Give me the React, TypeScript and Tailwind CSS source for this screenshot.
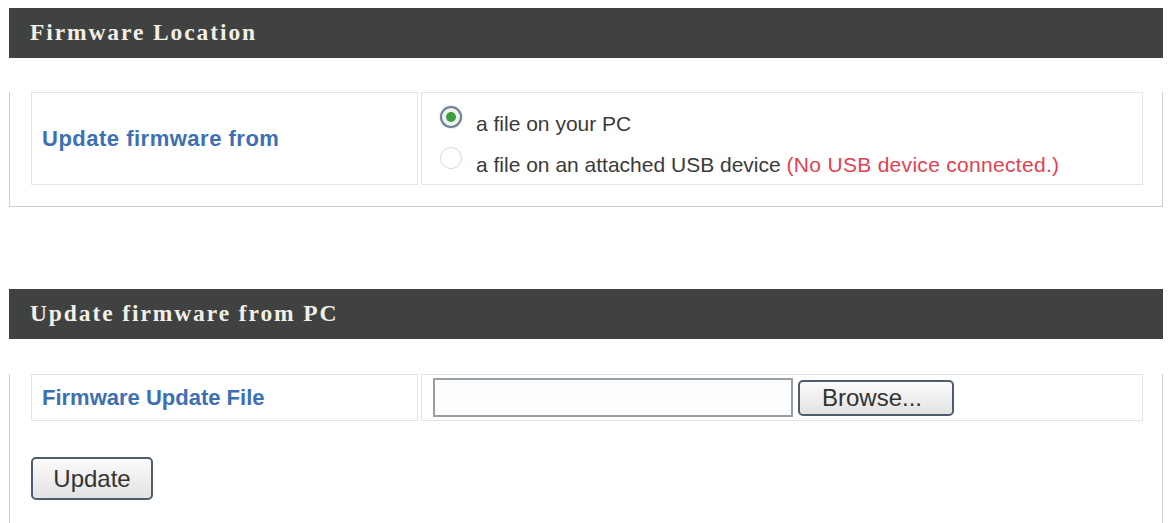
import React from "react";

// firmware upgrade page, two boxed sections
const sans = { fontFamily: '"Liberation Sans", Arial, sans-serif' };
const serif = { fontFamily: '"Liberation Serif", "Times New Roman", serif' };

const Panel = ({ title, children }: { title: string; children: React.ReactNode }) => (
  <section className="w-[1154px] ml-[9px]">
    <div className="h-[50px] bg-[#3f4241] flex items-center pl-[21px]">
      <h2
        className="text-[23.5px] font-bold tracking-[1.9px] text-[#f2efe6] leading-none"
        style={serif}
      >
        {title}
      </h2>
    </div>
    <div className="border border-t-0 border-[#cfcfcf] pl-[21px] pr-[19px]">{children}</div>
  </section>
);

const Radio = ({ checked, disabled }: { checked?: boolean; disabled?: boolean }) => (
  <span
    className={
      "w-[22px] h-[22px] rounded-full flex items-center justify-center shrink-0 " +
      (disabled
        ? "border border-[#d9d9d9] bg-white"
        : "border-2 border-[#6f8292] bg-[#eef3ee] shadow-[0_0_2px_#b8c4cc]")
    }
  >
    {checked && <span className="w-[10px] h-[10px] rounded-full bg-[#3e9d3e]" />}
  </span>
);

const BtnClass =
  "rounded-[5px] border-2 border-[#4d5d6b] bg-gradient-to-b from-[#fbfbfb] to-[#e2e2e2] text-[#333] text-[24px] leading-none";

export default function App() {
  return (
    <div className="w-[1168px] h-[523px] bg-white pt-[8px] overflow-hidden" style={sans}>
      <Panel title="Firmware Location">
        <div className="mt-[34px] mb-[21px] h-[93px] flex gap-[3px]">
          <div className="w-[387px] border border-[#e4e4e4] flex items-center pl-[10px]">
            <span className="text-[22px] font-bold text-[#3d70b3] tracking-[0.5px]">
              Update firmware from
            </span>
          </div>
          <div className="flex-1 border border-[#e4e4e4] pl-[18px] pt-[13px] text-[21px] text-[#3a3a3a]">
            <div className="flex items-start gap-[14px] h-[41px]">
              <Radio checked />
              <span className="mt-[6px] leading-[24px]">a file on your PC</span>
            </div>
            <div className="flex items-start gap-[14px]">
              <Radio disabled />
              <span className="mt-[6px] leading-[24px]">
                a file on an attached USB device{" "}
                <span className="text-[#e5404f] tracking-[0.3px]">(No USB device connected.)</span>
              </span>
            </div>
          </div>
        </div>
      </Panel>

      <div className="h-[82px]" />

      <Panel title="Update firmware from PC">
        <div className="mt-[35px] h-[47px] flex gap-[3px]">
          <div className="w-[387px] border border-[#e4e4e4] flex items-center pl-[10px]">
            <span className="text-[22px] font-bold text-[#3d70b3]">Firmware Update File</span>
          </div>
          <div className="flex-1 border border-[#e4e4e4] flex items-center pl-[11px] gap-[5px]">
            <input
              type="text"
              className="w-[360px] h-[39px] border-2 border-[#9a9ea3] bg-[#fbfdff] outline-none"
            />
            <button className={BtnClass + " w-[156px] h-[36px] pr-[8px]"}>Browse...</button>
          </div>
        </div>
        <div className="pt-[36px] pb-[23px]">
          <button className={BtnClass + " w-[122px] h-[43px]"}>Update</button>
        </div>
      </Panel>
    </div>
  );
}
